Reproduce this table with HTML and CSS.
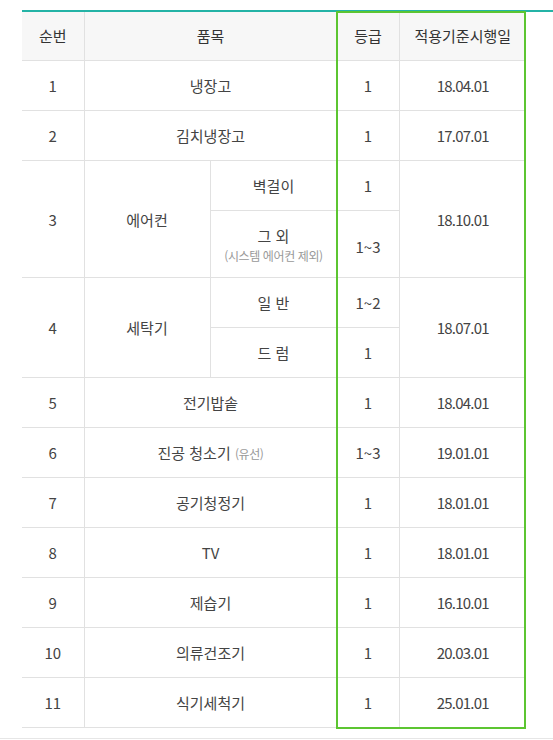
FILE: index.html
```html
<!DOCTYPE html>
<html lang="ko">
<head>
<meta charset="utf-8">
<link rel="stylesheet" href="styles.css">
</head>
<body>
<div class="wrap">
  <table class="grade-table">
    <colgroup>
      <col class="c-no"><col class="c-item"><col class="c-sub"><col class="c-grade"><col class="c-date">
    </colgroup>
    <thead>
      <tr><th>순번</th><th colspan="2">품목</th><th>등급</th><th>적용기준시행일</th></tr>
    </thead>
    <tbody>
      <tr><td>1</td><td colspan="2">냉장고</td><td>1</td><td class="date">18.04.01</td></tr>
      <tr><td>2</td><td colspan="2">김치냉장고</td><td>1</td><td class="date">17.07.01</td></tr>
      <tr><td rowspan="2">3</td><td rowspan="2">에어컨</td><td>벽걸이</td><td>1</td><td rowspan="2" class="date">18.10.01</td></tr>
      <tr class="tall"><td><span class="main">그 외</span><span class="note">(시스템 에어컨 제외)</span></td><td class="low">1~3</td></tr>
      <tr><td rowspan="2">4</td><td rowspan="2">세탁기</td><td>일 반</td><td>1~2</td><td rowspan="2" class="date">18.07.01</td></tr>
      <tr><td>드 럼</td><td>1</td></tr>
      <tr><td>5</td><td colspan="2">전기밥솥</td><td>1</td><td class="date">18.04.01</td></tr>
      <tr><td>6</td><td colspan="2">진공 청소기 <span class="note-inline">(유선)</span></td><td>1~3</td><td class="date">19.01.01</td></tr>
      <tr><td>7</td><td colspan="2">공기청정기</td><td>1</td><td class="date">18.01.01</td></tr>
      <tr><td>8</td><td colspan="2">TV</td><td>1</td><td class="date">18.01.01</td></tr>
      <tr><td>9</td><td colspan="2">제습기</td><td>1</td><td class="date">16.10.01</td></tr>
      <tr><td>10</td><td colspan="2">의류건조기</td><td>1</td><td class="date">20.03.01</td></tr>
      <tr><td>11</td><td colspan="2">식기세척기</td><td>1</td><td class="date">25.01.01</td></tr>
    </tbody>
  </table>
  <div class="highlight"></div>
</div>
<div class="page-line"></div>
</body>
</html>
```

FILE: styles.css
```css
html, body {
  margin: 0;
  padding: 0;
  background: #ffffff;
}
body {
  font-family: "Noto Sans CJK KR", "Noto Sans", sans-serif;
  color: #444;
}
.wrap {
  position: relative;
  margin: 10px 0 0 22px;
  border-top: 2px solid #24b3a6;
}
.grade-table {
  border-collapse: collapse;
  width: 504px;
  table-layout: fixed;
}
.c-no { width: 62px; }
.c-item { width: 126px; }
.c-sub { width: 127px; }
.c-grade { width: 62px; }
.c-date { width: 127px; }
.grade-table th,
.grade-table td {
  border: 1px solid #e1e1e1;
  text-align: center;
  vertical-align: middle;
  padding: 2px 0 0;
  font-size: 15px;
  line-height: 20px;
  height: 50px;
  box-sizing: border-box;
}
.grade-table th {
  background: #f7f7f7;
  font-weight: normal;
  color: #333;
  height: 48px;
  padding: 0;
  border-top: none;
}
.grade-table tr > :first-child { border-left: none; }
.grade-table tr > :last-child { border-right: none; }
.grade-table tr.tall td { height: 67px; }
.grade-table td.low { padding-top: 6px; }
.date { letter-spacing: -0.8px; }
.main { display: block; }
.note {
  display: block;
  font-size: 12px;
  line-height: 16px;
  color: #999;
  letter-spacing: -0.4px;
  margin-top: 2px;
}
.note-inline {
  font-size: 12px;
  color: #999;
  letter-spacing: -0.4px;
}
.highlight {
  position: absolute;
  left: 314px;
  top: -1px;
  width: 190px;
  bottom: -1px;
  border: 2px solid #5cc531;
  box-sizing: border-box;
  pointer-events: none;
}
.page-line {
  margin-top: 10px;
  border-top: 1px solid #e6e6e6;
}
```
